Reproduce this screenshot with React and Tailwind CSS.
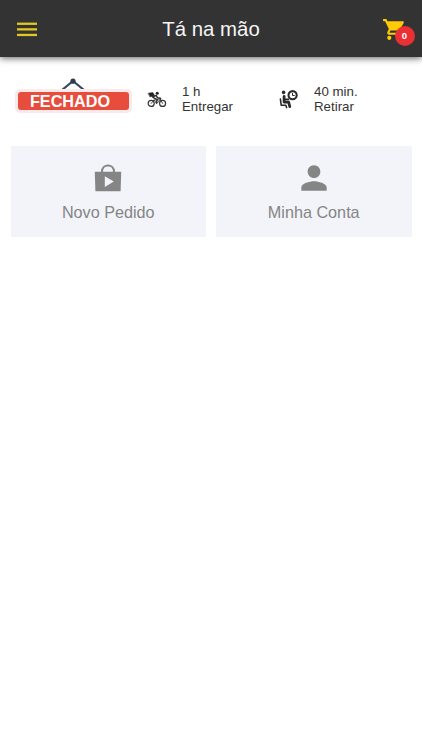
import React from 'react';
import { MdPerson, MdShoppingCart } from 'react-icons/md';

const MenuIcon = () => (
  <svg className="w-5 h-[15px]" viewBox="0 0 20 15" fill="#e3c61f">
    <rect y="0.6" width="20" height="2.3" />
    <rect y="6.2" width="20" height="2.3" />
    <rect y="11.8" width="20" height="2.3" />
  </svg>
);

const ClosedSign = () => (
  <div className="w-[117px] h-[38px] flex flex-col items-center">
    <svg className="w-7 h-[13px] shrink-0" viewBox="0 0 28 13" fill="none">
      <path d="M2.6 12.4L14 3L25.4 12.4" stroke="#34495e" strokeWidth="2.1" />
      <circle cx="14" cy="3.2" r="2.6" fill="#2c3e50" />
    </svg>
    <div className="w-[117px] h-[24px] shrink-0 -mt-[2px] rounded-[5px] border-[3px] border-[#faebea] bg-[#faebea] flex">
      <div className="grow rounded-[3px] bg-[#e84c3d] flex items-center justify-center pr-[6px] text-white font-bold text-[16.2px] leading-none">
        FECHADO
      </div>
    </div>
  </div>
);

const BikeIcon = () => (
  <svg className="w-5 h-[17px] shrink-0" viewBox="0 0 20 17" fill="none" stroke="#333" strokeLinecap="round" strokeLinejoin="round">
    <circle cx="4.2" cy="12.4" r="3" strokeWidth="1.2" />
    <circle cx="15.6" cy="12.4" r="3" strokeWidth="1.2" />
    <path d="M4.2 12.4L7 9L13.5 8.8L15.6 12.4M7 9L9.6 12.6L13.5 8.8M13 6.8L13.8 9" strokeWidth="0.9" />
    <path d="M5.5 6L9.2 4.4L10.6 6.8L13.6 7.4M6 6.4L10.2 8.6L9.4 12" strokeWidth="1.5" />
    <path d="M1.5 2.2L5.8 1.6L7.6 4.6L3.2 5.8Z" fill="#222" stroke="#222" strokeWidth="0.6" />
    <circle cx="10.2" cy="2.2" r="1.5" fill="#222" stroke="none" />
  </svg>
);

const WaitingIcon = () => (
  <svg className="w-[21px] h-[21px] shrink-0" viewBox="0 0 21 21" fill="none" stroke="#2b2b2b" strokeLinecap="round" strokeLinejoin="round">
    <circle cx="5.6" cy="3.4" r="1.8" fill="#2b2b2b" stroke="none" />
    <path d="M6.1 7.4V13H10.6L11.8 17.6" strokeWidth="2.8" />
    <path d="M7 10.2H10.6" strokeWidth="1.6" />
    <path d="M2.4 10L3.2 16.2H7.8L8.6 18.6" strokeWidth="1.6" />
    <circle cx="14.6" cy="6.2" r="4.1" strokeWidth="2.1" />
    <path d="M14.5 4.4V6.5H16.3" strokeWidth="1" />
  </svg>
);

const BagIcon = () => (
  <svg className="w-7 h-7" viewBox="0 0 28 28">
    <path d="M8 8.5V7.6C8 -.7 20 -.7 20 7.6V8.5" fill="none" stroke="#858585" strokeWidth="2" />
    <path d="M.8 7.8H27.2L26.6 27.2H1.4Z" fill="#858585" />
    <path d="M10.8 12.2L19.8 17.6L10.8 23Z" fill="#f3f4f9" />
  </svg>
);

const ServiceTime = ({ icon, time, label }) => (
  <div className="flex items-center gap-[15px] text-[13.3px] leading-[15px] text-[#333]">
    {icon}
    <div className="whitespace-nowrap">
      <p>{time}</p>
      <p>{label}</p>
    </div>
  </div>
);

const MenuCard = ({ icon, label }) => (
  <button type="button" className="h-[91px] bg-[#f3f4f9] flex flex-col items-center pt-[13px] text-[#858585]">
    <span className="h-[37px] flex items-center justify-center">{icon}</span>
    <span className="mt-[6px] text-[16.2px] leading-[20px]">{label}</span>
  </button>
);

const App = () => {
  return (
    <div className="min-h-screen bg-white font-['Liberation_Sans',Arial,sans-serif]">
      <header className="h-[57px] bg-[#333333] grid grid-cols-[1fr_auto_1fr] items-center shadow-[0_1px_7px_rgba(0,0,0,0.65)]">
        <button type="button" aria-label="Menu" className="ml-[17px] w-5 mt-[1px]">
          <MenuIcon />
        </button>
        <h1 className="text-[20.4px] leading-[26px] text-[#f5f5f5]">Tá na mão</h1>
        <div className="relative justify-self-end mr-[15px] mt-[2px]">
          <MdShoppingCart className="w-[25px] h-[25px] text-[#ffcb05]" />
          <span className="absolute left-[12.5px] top-[9px] w-5 h-5 rounded-full bg-[#ea2f35] text-white text-[9.5px] font-bold flex items-center justify-center">
            0
          </span>
        </div>
      </header>

      <section className="h-[89px] pt-[21px] pl-[14.5px] flex items-start">
        <ClosedSign />
        <div className="ml-[15.5px] mt-[6px] w-[131px]">
          <ServiceTime icon={<BikeIcon />} time="1 h" label="Entregar" />
        </div>
        <div className="mt-[6px]">
          <ServiceTime icon={<WaitingIcon />} time="40 min." label="Retirar" />
        </div>
      </section>

      <nav className="grid grid-cols-2 gap-[10px] px-[10.5px]">
        <MenuCard icon={<BagIcon />} label="Novo Pedido" />
        <MenuCard icon={<MdPerson className="w-[38px] h-[38px]" />} label="Minha Conta" />
      </nav>
    </div>
  );
};

export default App;
